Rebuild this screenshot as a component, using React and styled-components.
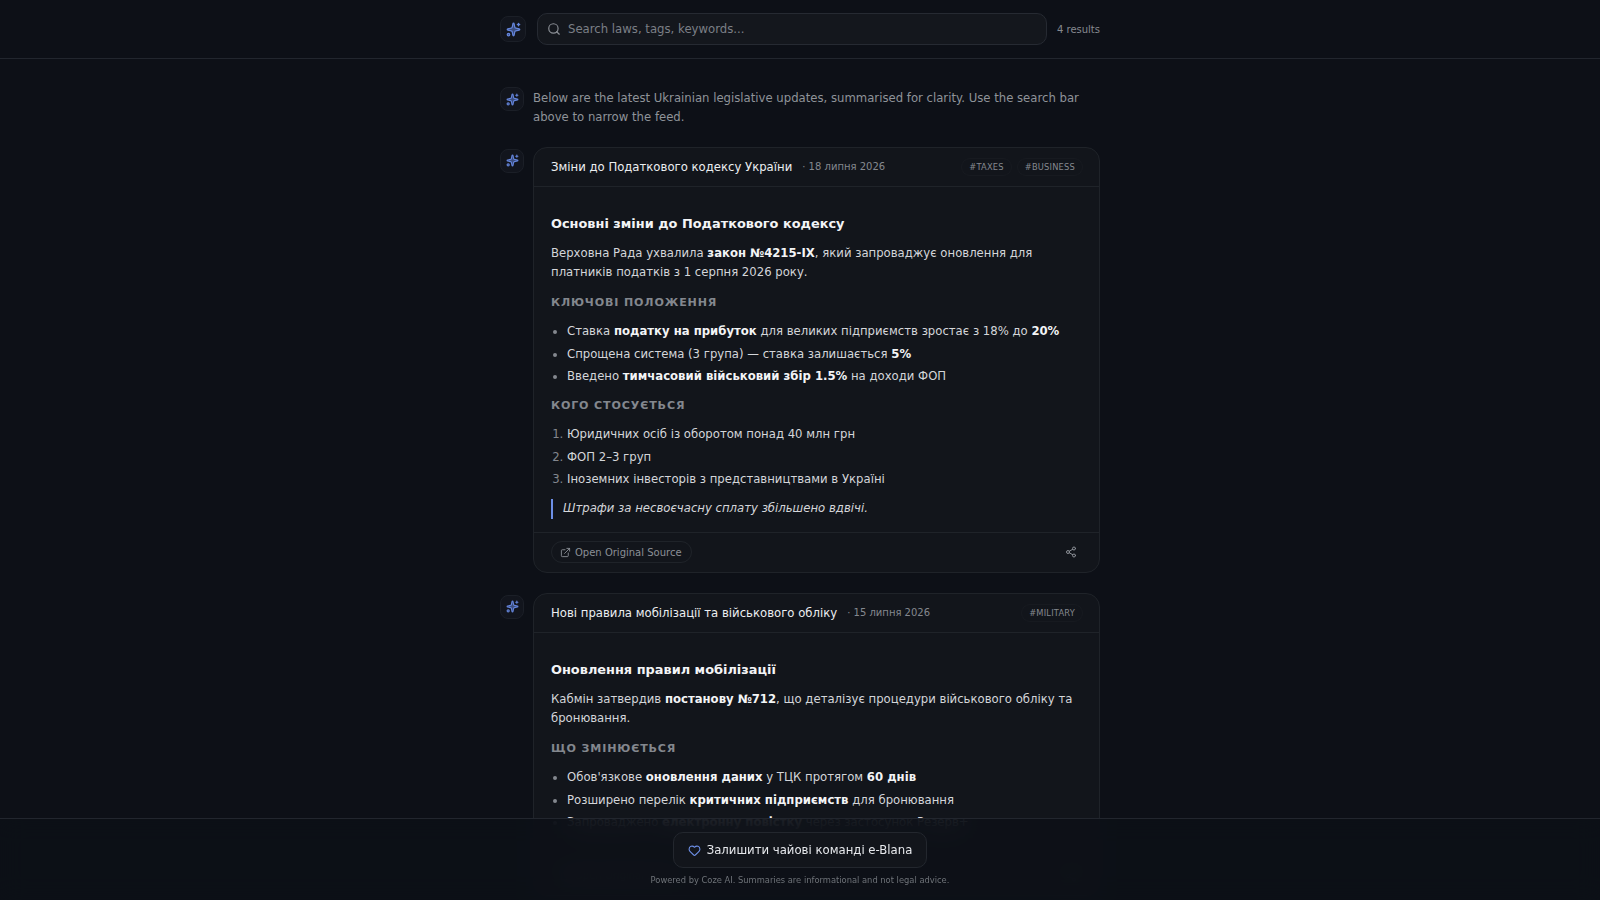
import React from 'react';
import styled, { createGlobalStyle } from 'styled-components';
import { Search, Sparkles, ExternalLink, Share2, Heart } from 'lucide-react';

const feed = [
    {
        title: 'Зміни до Податкового кодексу України',
        date: '18 липня 2026',
        tags: ['#TAXES', '#BUSINESS'],
        heading: 'Основні зміни до Податкового кодексу',
        lead: <>Верховна Рада ухвалила <b>закон №4215-IX</b>, який запроваджує оновлення для платників податків з 1 серпня 2026 року.</>,
        sections: [
            {
                title: 'Ключові положення',
                items: [
                    <>Ставка <b>податку на прибуток</b> для великих підприємств зростає з 18% до <b>20%</b></>,
                    <>Спрощена система (3 група) — ставка залишається <b>5%</b></>,
                    <>Введено <b>тимчасовий військовий збір 1.5%</b> на доходи ФОП</>,
                ],
            },
            {
                title: 'Кого стосується',
                ordered: true,
                items: [
                    'Юридичних осіб із оборотом понад 40 млн грн',
                    'ФОП 2–3 груп',
                    'Іноземних інвесторів з представництвами в Україні',
                ],
            },
        ],
        quote: 'Штрафи за несвоєчасну сплату збільшено вдвічі.',
    },
    {
        title: 'Нові правила мобілізації та військового обліку',
        date: '15 липня 2026',
        tags: ['#MILITARY'],
        heading: 'Оновлення правил мобілізації',
        lead: <>Кабмін затвердив <b>постанову №712</b>, що деталізує процедури військового обліку та бронювання.</>,
        sections: [
            {
                title: 'Що змінюється',
                items: [
                    <>Обов'язкове <b>оновлення даних</b> у ТЦК протягом <b>60 днів</b></>,
                    <>Розширено перелік <b>критичних підприємств</b> для бронювання</>,
                    <>Запроваджено <b>електронну повістку</b> через застосунок Резерв+</>,
                ],
            },
        ],
    },
];

function Mark({ large })
{
    return (
        <Avatar $large={large}>
            <Sparkles size={large ? 15 : 13} fill="currentColor" fillOpacity={0.5} strokeWidth={2} />
        </Avatar>
    );
}

function FeedCard({ item })
{
    return (
        <CardMessage>
            <Mark />
            <Card>
                <CardHead>
                    <CardTitle>{item.title}</CardTitle>
                    <CardDate>· {item.date}</CardDate>
                    <Tags>
                        {item.tags.map((tag) => <Tag key={tag}>{tag}</Tag>)}
                    </Tags>
                </CardHead>
                <CardBody>
                    <Heading>{item.heading}</Heading>
                    <Lead>{item.lead}</Lead>
                    {item.sections.map((section) => {
                        const List = section.ordered ? NumberList : BulletList;
                        return (
                            <React.Fragment key={section.title}>
                                <SectionTitle>{section.title}</SectionTitle>
                                <List>
                                    {section.items.map((row, i) => <li key={i}>{row}</li>)}
                                </List>
                            </React.Fragment>
                        );
                    })}
                    {item.quote && <Quote>{item.quote}</Quote>}
                </CardBody>
                <CardFoot>
                    <SourceButton>
                        <ExternalLink size={11} />
                        Open Original Source
                    </SourceButton>
                    <ShareButton>
                        <Share2 size={12} />
                    </ShareButton>
                </CardFoot>
            </Card>
        </CardMessage>
    );
}

function App()
{
    return (
        <Page>
            <GlobalStyle />
            <TopBar>
                <TopInner>
                    <Mark large />
                    <SearchBox>
                        <Search size={14} />
                        <SearchInput placeholder="Search laws, tags, keywords..." />
                    </SearchBox>
                    <Results>4 results</Results>
                </TopInner>
            </TopBar>
            <Feed>
                <Message>
                    <Mark />
                    <Intro>Below are the latest Ukrainian legislative updates, summarised for clarity. Use the search bar above to narrow the feed.</Intro>
                </Message>
                {feed.map((item) => <FeedCard key={item.title} item={item} />)}
            </Feed>
            <BottomBar>
                <TipButton>
                    <Heart size={13} />
                    Залишити чайові команді e-Blana
                </TipButton>
                <Powered>Powered by Coze AI. Summaries are informational and not legal advice.</Powered>
            </BottomBar>
        </Page>
    );
}

export default App;

const GlobalStyle = createGlobalStyle`
    html, body {
        margin: 0;
        height: 100%;
        overflow: hidden;
        background: #0d1017;
    }

    * {
        box-sizing: border-box;
    }
`

const Page = styled.div`
    height: 900px;
    overflow: hidden;
    background: #0d1017;
    color: #e6e8ec;
    font-family: "DejaVu Sans", sans-serif;
`

const TopBar = styled.header`
    height: 59px;
    border-bottom: 1px solid #22262e;
`

const TopInner = styled.div`
    width: 600px;
    height: 58px;
    margin: 0 auto;
    display: flex;
    align-items: center;
    gap: 10px;
`

const Avatar = styled.div`
    flex: none;
    width: ${(p) => (p.$large ? '26px' : '24px')};
    height: ${(p) => (p.$large ? '26px' : '24px')};
    display: flex;
    align-items: center;
    justify-content: center;
    border: 1px solid #1b1f27;
    border-radius: 8px;
    background: #12151d;
    color: #6485dc;
`

const SearchBox = styled.div`
    flex: 1;
    height: 32px;
    margin-left: 1px;
    display: flex;
    align-items: center;
    gap: 5px;
    padding: 0 8px 0 9px;
    border: 1px solid #262a32;
    border-radius: 10px;
    background: #14171d;
    color: #8b8f96;
`

const SearchInput = styled.input`
    flex: 1;
    border: none;
    outline: none;
    background: transparent;
    color: #e6e8ec;
    font: 11.7px "DejaVu Sans", sans-serif;

    &::placeholder {
        color: #7b7f86;
        opacity: 1;
    }
`

const Results = styled.div`
    font-size: 10px;
    color: #85898f;
`

const Feed = styled.main`
    width: 600px;
    margin: 0 auto;
    padding-top: 28px;
    display: flex;
    flex-direction: column;
    gap: 20px;
`

const Message = styled.div`
    display: flex;
    align-items: flex-start;
    gap: 9px;
`

const CardMessage = styled(Message)`
    & > ${Avatar} {
        margin-top: 2px;
    }
`

const Intro = styled.p`
    margin: 0 0 -1px;
    padding-top: 2px;
    flex: 1;
    font-size: 11.68px;
    line-height: 19.3px;
    color: #8f9399;
`

const Card = styled.article`
    flex: 1;
    min-width: 0;
    border: 1px solid #1f2329;
    border-radius: 14px;
    background: #12151b;
`

const CardHead = styled.div`
    height: 39px;
    display: flex;
    align-items: center;
    padding: 0 17px;
    border-bottom: 1px solid #1f2329;
`

const CardTitle = styled.div`
    font-size: 11.68px;
    color: #eceef1;
`

const CardDate = styled.div`
    margin-left: 10px;
    font-size: 10px;
    color: #84888f;
`

const Tags = styled.div`
    margin-left: auto;
    margin-right: -1px;
    display: flex;
    gap: 5px;
`

const Tag = styled.span`
    padding: 3px 7px;
    border: 1px solid #171a20;
    border-radius: 999px;
    font-size: 8.3px;
    letter-spacing: 0.2px;
    color: #85898f;
`

const CardBody = styled.div`
    padding: 27px 17px 13px;
    font-size: 11.68px;
    line-height: 19.3px;
    color: #d4d6da;

    b {
        font-weight: 700;
        color: #f3f4f6;
    }
`

const Heading = styled.h3`
    margin: 0 0 10px;
    font-size: 12.9px;
    line-height: 20px;
    font-weight: 700;
    color: #f3f4f6;
`

const Lead = styled.p`
    margin: 0 0 11px;
`

const SectionTitle = styled.h4`
    margin: 0 0 10px;
    font-size: 11.1px;
    line-height: 19px;
    font-weight: 700;
    letter-spacing: 0.85px;
    text-transform: uppercase;
    color: #83878e;
`

const BulletList = styled.ul`
    margin: 0 0 10px;
    padding-left: 16px;

    li {
        margin-bottom: 3.1px;
    }

    li::marker {
        color: #83878e;
    }
`

const NumberList = styled(BulletList).attrs({ as: 'ol' })``

const Quote = styled.blockquote`
    margin: 10px 0 0;
    padding-left: 10px;
    border-left: 2px solid #6d8fe6;
    font-style: italic;
    color: #d4d6da;
`

const CardFoot = styled.div`
    height: 40px;
    display: flex;
    align-items: center;
    justify-content: space-between;
    padding: 0 17px;
    border-top: 1px solid #1f2329;
`

const SourceButton = styled.button`
    height: 22px;
    display: flex;
    align-items: center;
    gap: 4px;
    padding: 0 9px 0 8px;
    border: 1px solid #1f2329;
    border-radius: 999px;
    background: transparent;
    color: #8b8f96;
    font: 10px "DejaVu Sans", sans-serif;
`

const ShareButton = styled.button`
    display: flex;
    margin-right: 5px;
    padding: 0;
    border: none;
    background: transparent;
    color: #8b8f96;
`

const BottomBar = styled.footer`
    position: fixed;
    left: 0;
    right: 0;
    bottom: 0;
    height: 82px;
    display: flex;
    flex-direction: column;
    align-items: center;
    padding-top: 13px;
    border-top: 1px solid #22262e;
    background: rgba(13, 16, 23, 0.88);
    backdrop-filter: blur(12px);
`

const TipButton = styled.button`
    width: 254px;
    height: 36px;
    display: flex;
    align-items: center;
    justify-content: center;
    gap: 6px;
    border: 1px solid #23272e;
    border-radius: 10px;
    background: #12151b;
    color: #e6e8ec;
    font: 11.7px "DejaVu Sans", sans-serif;

    svg {
        color: #6d8fe6;
    }
`

const Powered = styled.div`
    margin-top: 7px;
    font-size: 8.33px;
    color: #6f7379;
`
